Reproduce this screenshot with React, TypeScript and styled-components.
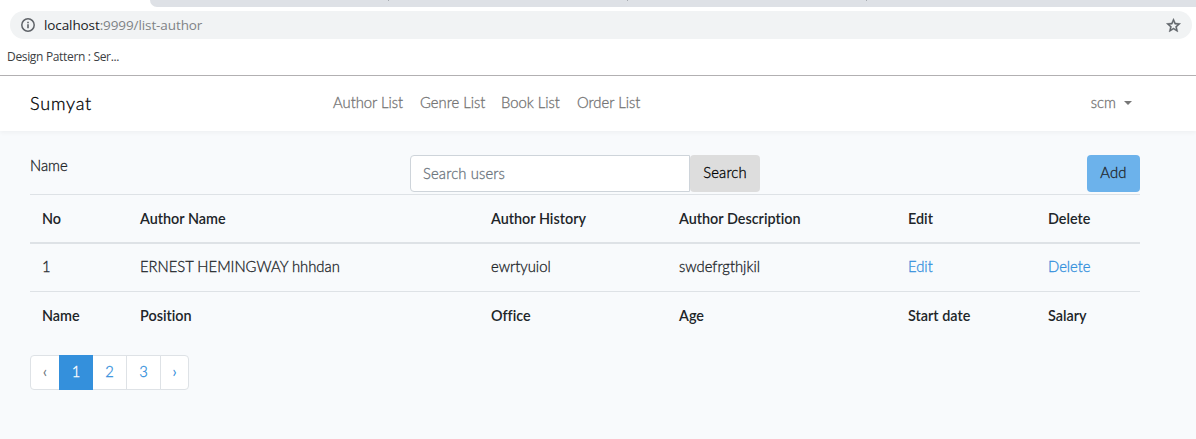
import React from 'react';
import styled, { createGlobalStyle } from 'styled-components';

const GlobalStyle = createGlobalStyle`
  *, *::before, *::after { box-sizing: border-box; }
  body {
    margin: 0;
    height: 439px;
    overflow: hidden;
    background: #f8fafc;
    color: #212529;
    font: 300 14.8px/23px Lato, sans-serif;
    font-variant-ligatures: none;
    -webkit-text-stroke-width: 0.3px;
  }
  a { color: #3490dc; text-decoration: none; }
`;

const Browser = styled.header`
  height: 76px;
  background: #fff;
  border-bottom: 1px solid #b3b1b3;
  font-family: 'Open Sans', sans-serif;
  font-weight: 400;
  -webkit-text-stroke-width: 0;
`;

const TabStrip = styled.div`
  height: 7px;
  margin-left: 150px;
  background: #dee1e6;
  border-bottom-left-radius: 7px;
  display: flex;
  gap: 238px;
  padding-left: 238px;
`;

const TabDivider = styled.i`
  width: 1px;
  height: 1px;
  background: #a9adb2;
`;

const AddressBar = styled.div`
  height: 28px;
  margin: 4px 4px 0 10px;
  padding: 0 10px;
  border-radius: 14px;
  background: #f1f3f4;
  display: flex;
  align-items: center;
`;

const Url = styled.span`
  flex: 1;
  margin-left: 8px;
  font-size: 13.5px;
  letter-spacing: -0.1px;
  color: #808386;
  b { font-weight: 400; color: #202124; }
`;

const Bookmark = styled.div`
  padding: 9px 0 0 7px;
  font-size: 12px;
  line-height: 18px;
  letter-spacing: -0.33px;
  color: #3c4043;
`;

const Nav = styled.nav`
  height: 55px;
  padding: 0 64px 2px 30px;
  display: grid;
  grid-template-columns: 303px 1fr auto;
  align-items: center;
  background: #fff;
  box-shadow: 0 2px 4px rgba(0, 0, 0, 0.04);
  color: #747474;
`;

const Brand = styled.span`
  margin-top: 2px;
  font-size: 18px;
  letter-spacing: 0.8px;
  color: #000;
`;

const NavLinks = styled.div`
  display: flex;
  gap: 16px;
`;

const NavLink = styled.span<{ $w: number }>`
  width: ${(p) => p.$w}px;
  white-space: nowrap;
`;

const UserMenu = styled.span`
  display: flex;
  align-items: center;
  gap: 8px;
`;

const Caret = styled.i`
  border: 4.8px solid transparent;
  border-top-color: #777;
  border-bottom: 0;
`;

const Main = styled.main`
  padding: 24px 56px 0 30px;
`;

const Toolbar = styled.div`
  height: 39px;
  display: flex;
  align-items: flex-start;
`;

const Label = styled.span`
  width: 380px;
  margin-top: -1px;
`;

const SearchInput = styled.input`
  width: 280px;
  height: 37px;
  padding: 0 12px 1px;
  border: 1px solid #ced4da;
  border-radius: 4px 0 0 4px;
  background: #fff;
  font: inherit;
  letter-spacing: 0.15px;
  outline: none;
  &::placeholder { color: #6c757d; opacity: 1; }
`;

const Button = styled.button<{ $primary?: boolean }>`
  width: ${(p) => (p.$primary ? 53 : 70)}px;
  height: 37px;
  margin-left: ${(p) => (p.$primary ? 'auto' : '0')};
  padding: 0 0 2px;
  border: 0;
  border-radius: 4px;
  background: ${(p) => (p.$primary ? '#6cb2eb' : '#ddd')};
  color: ${(p) => (p.$primary ? '#212529' : '#000')};
  font: inherit;
  letter-spacing: 0.15px;
  white-space: nowrap;
`;

const Table = styled.table`
  width: 1110px;
  table-layout: fixed;
  border-collapse: separate;
  border-spacing: 0;
  th, td {
    padding: 12px;
    border-top: 1px solid #dee2e6;
    text-align: left;
    white-space: nowrap;
  }
  th { font-size: 14.4px; font-weight: 600; -webkit-text-stroke-width: 0; }
  thead th { border-bottom: 2px solid #dee2e6; }
  tbody td { border-top: 0; padding: 11px 12px 13px; }
`;

const Pagination = styled.ul`
  display: flex;
  margin: 16px 0 0;
  padding: 0;
  list-style: none;
`;

const Page = styled.li<{ $w: number; $active?: boolean; $muted?: boolean }>`
  width: ${(p) => p.$w}px;
  height: 35px;
  margin-right: -1px;
  border: 1px solid ${(p) => (p.$active ? '#3490dc' : '#dee2e6')};
  background: ${(p) => (p.$active ? '#3490dc' : '#fff')};
  color: ${(p) => (p.$active ? '#fff' : p.$muted ? '#6c757d' : '#3490dc')};
  position: relative;
  z-index: ${(p) => (p.$active ? 1 : 0)};
  line-height: 31px;
  text-align: center;
  &:first-child { border-radius: 4px 0 0 4px; }
  &:last-child { border-radius: 0 4px 4px 0; }
`;

const InfoIcon = () => (
  <svg width="16" height="16" viewBox="0 0 16 16" fill="none" stroke="#5f6368">
    <circle cx="8" cy="8" r="6.2" strokeWidth="1.5" />
    <path d="M8 7.2V11.2M8 4.7V6.2" strokeWidth="1.6" />
  </svg>
);

const StarIcon = () => (
  <svg width="17" height="17" viewBox="0 0 24 24" fill="#5f6368">
    <path d="M22 9.24l-7.19-.62L12 2 9.19 8.63 2 9.24l5.46 4.73L5.82 21 12 17.27 18.18 21l-1.63-7.03L22 9.24zM12 15.4l-3.76 2.27 1-4.28-3.32-2.88 4.38-.38L12 6.1l1.71 4.04 4.38.38-3.32 2.88 1 4.28L12 15.4z" stroke="#5f6368" strokeWidth=".6" />
  </svg>
);

const columnWidths = [98, 351, 188, 229, 140, 104];
const headings = ['No', 'Author Name', 'Author History', 'Author Description', 'Edit', 'Delete'];
const footings = ['Name', 'Position', 'Office', 'Age', 'Start date', 'Salary'];
const links = [
  { label: 'Author List', width: 71 },
  { label: 'Genre List', width: 65 },
  { label: 'Book List', width: 60 },
  { label: 'Order List', width: 65 },
];

export default function App() {
  return (
    <>
      <GlobalStyle />
      <Browser>
        <TabStrip><TabDivider /><TabDivider /><TabDivider /></TabStrip>
        <AddressBar>
          <InfoIcon />
          <Url><b>localhost</b>:9999/list-author</Url>
          <StarIcon />
        </AddressBar>
        <Bookmark>Design Pattern : Ser...</Bookmark>
      </Browser>
      <Nav>
        <Brand>Sumyat</Brand>
        <NavLinks>
          {links.map((l) => <NavLink key={l.label} $w={l.width}>{l.label}</NavLink>)}
        </NavLinks>
        <UserMenu>scm<Caret /></UserMenu>
      </Nav>
      <Main>
        <Toolbar>
          <Label>Name</Label>
          <SearchInput placeholder="Search users" />
          <Button>Search</Button>
          <Button $primary>Add</Button>
        </Toolbar>
        <Table>
          <colgroup>{columnWidths.map((w, i) => <col key={i} style={{ width: w }} />)}</colgroup>
          <thead><tr>{headings.map((h) => <th key={h}>{h}</th>)}</tr></thead>
          <tbody>
            <tr>
              <td>1</td>
              <td>ERNEST HEMINGWAY hhhdan</td>
              <td>ewrtyuiol</td>
              <td>swdefrgthjkil</td>
              <td><a href="#edit">Edit</a></td>
              <td><a href="#delete">Delete</a></td>
            </tr>
          </tbody>
          <tfoot><tr>{footings.map((f) => <th key={f}>{f}</th>)}</tr></tfoot>
        </Table>
        <Pagination>
          <Page $w={30} $muted>‹</Page>
          <Page $w={34} $active>1</Page>
          <Page $w={35}>2</Page>
          <Page $w={35}>3</Page>
          <Page $w={29}>›</Page>
        </Pagination>
      </Main>
    </>
  );
}
